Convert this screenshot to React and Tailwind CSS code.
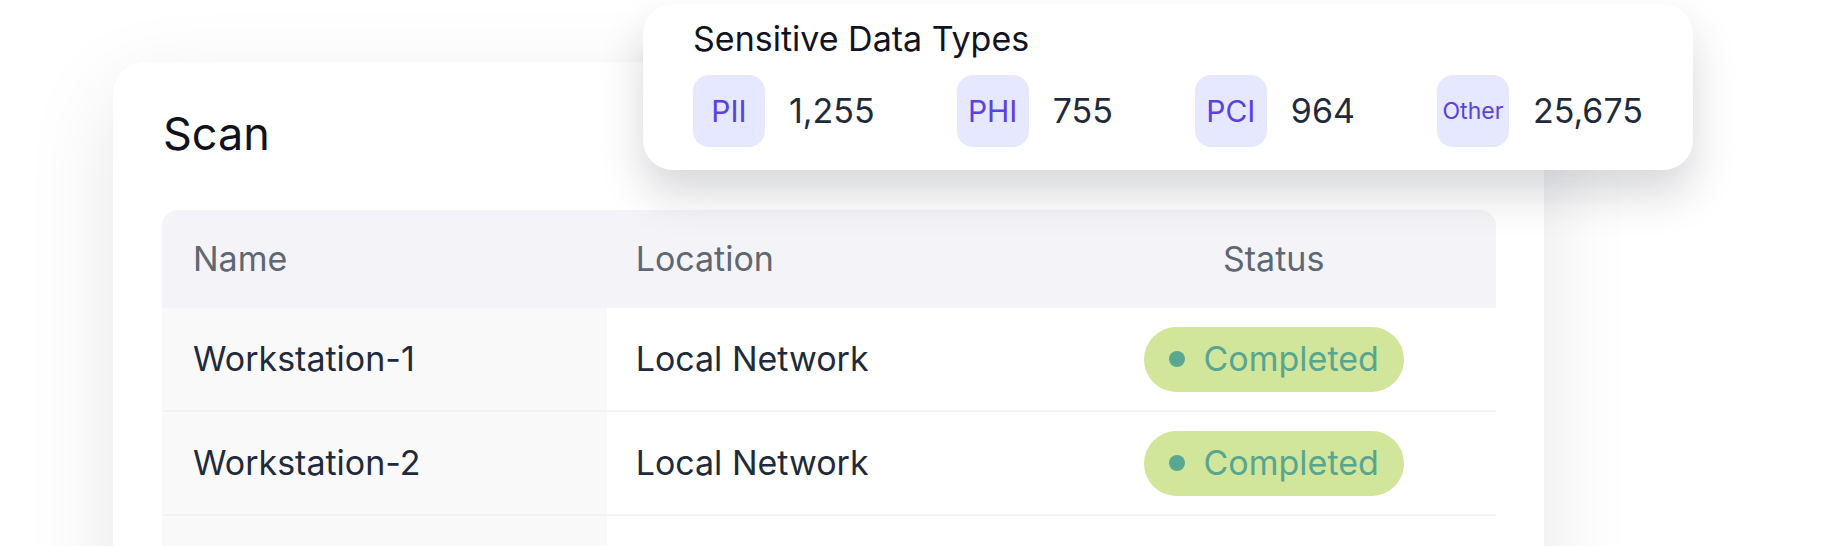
import React from "react";

const rows = [
  { name: "Workstation-1", location: "Local Network", status: "Completed" },
  { name: "Workstation-2", location: "Local Network", status: "Completed" },
  { name: "", location: "", status: "" },
];

const types = [
  { label: "PII", value: "1,255", small: false },
  { label: "PHI", value: "755", small: false },
  { label: "PCI", value: "964", small: false },
  { label: "Other", value: "25,675", small: true },
];

function Badge({ text }) {
  return (
    <div className="flex h-[65px] items-center gap-[19px] rounded-full bg-[#d1e59b] px-[25px] text-[34px] leading-none text-[#58a690]">
      <span className="h-[16px] w-[16px] rounded-full bg-[#5aa892]" />
      <span>{text}</span>
    </div>
  );
}

export default function App() {
  return (
    <div className="relative h-[546px] w-[1836px] overflow-hidden bg-white font-['Inter',sans-serif]">
      <div className="ml-[113px] mt-[62px] h-[620px] w-[1431px] rounded-[32px] bg-white pl-[49px] pr-[48px] pt-[49px] shadow-[0_30px_90px_rgba(17,24,39,0.10)]">
        <h1 className="pl-px text-[45px] leading-none text-[#10121d]">Scan</h1>
        <div className="mt-[54px] overflow-hidden rounded-t-[16px]">
          <div className="grid h-[98px] grid-cols-3 items-center bg-[#f4f4f8] text-[34px] leading-none text-[#5e6773]">
            <div className="pl-[31px]">Name</div>
            <div className="pl-[29px]">Location</div>
            <div className="text-center">Status</div>
          </div>
          {rows.map((r, i) => (
            <div
              key={i}
              className="grid h-[104px] grid-cols-3 border-b-2 border-[#f2f3f7] text-[34px] leading-none text-[#1f2b3a]"
            >
              <div className="flex items-center bg-[#f9f9fa] pl-[31px]">{r.name}</div>
              <div className="flex items-center pl-[29px]">{r.location}</div>
              <div className="flex items-center justify-center">
                {r.status && <Badge text={r.status} />}
              </div>
            </div>
          ))}
        </div>
      </div>

      <div className="absolute left-[643px] top-[4px] h-[166px] w-[1050px] rounded-[30px] bg-white px-[50px] pt-[18px] shadow-[0_24px_44px_rgba(17,24,39,0.17)]">
        <div className="text-[34px] leading-none text-[#111322]">Sensitive Data Types</div>
        <div className="mt-[19px] flex items-center justify-between">
          {types.map((t) => (
            <div key={t.label} className="flex items-center gap-[24px]">
              <div
                className={
                  t.small
                    ? "flex h-[72px] w-[72px] items-center justify-center rounded-[16px] bg-[#e5e8fe] text-[23px] leading-none text-[#5a41e0]"
                    : "flex h-[72px] w-[72px] items-center justify-center rounded-[16px] bg-[#e5e8fe] text-[30px] leading-none text-[#5a41e0]"
                }
              >
                {t.label}
              </div>
              <span className="text-[34px] leading-none text-[#1f2b3a]">{t.value}</span>
            </div>
          ))}
        </div>
      </div>
    </div>
  );
}
